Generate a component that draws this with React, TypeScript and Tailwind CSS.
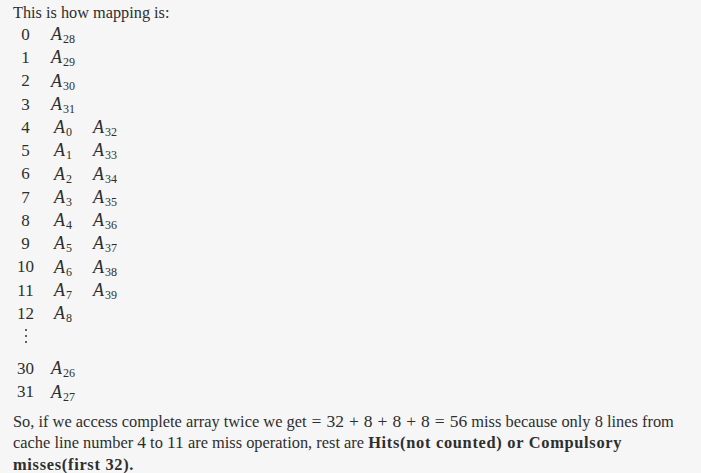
import React from "react";

const rows: { n: string; a: string; b?: string }[] = [
  { n: "0", a: "28" },
  { n: "1", a: "29" },
  { n: "2", a: "30" },
  { n: "3", a: "31" },
  { n: "4", a: "0", b: "32" },
  { n: "5", a: "1", b: "33" },
  { n: "6", a: "2", b: "34" },
  { n: "7", a: "3", b: "35" },
  { n: "8", a: "4", b: "36" },
  { n: "9", a: "5", b: "37" },
  { n: "10", a: "6", b: "38" },
  { n: "11", a: "7", b: "39" },
  { n: "12", a: "8" },
];

const tail = [
  { n: "30", a: "26" },
  { n: "31", a: "27" },
];

function A({ sub }: { sub: string }) {
  return (
    <span className="whitespace-nowrap">
      <span className="italic text-[18px]">A</span>
      <span className="text-[12px] relative top-[3px] ml-[1px]">{sub}</span>
    </span>
  );
}

function Row({ n, a, b }: { n: string; a: string; b?: string }) {
  return (
    <div className="grid grid-cols-[25px_50px_34px] h-[23.25px] items-center">
      <span className="text-center">{n}</span>
      <span className="text-center">
        <A sub={a} />
      </span>
      <span className="text-center">{b ? <A sub={b} /> : null}</span>
    </div>
  );
}

function Op({ c }: { c: string }) {
  return <span className="mx-[5px]">{c}</span>;
}

export default function App() {
  return (
    <div className="w-[701px] h-[473px] bg-[#f6f6f6] text-[#2e2e2e] pl-[13px] pt-[2px] overflow-hidden font-['Liberation_Serif',serif]">
      <p className="text-[16.3px] leading-[21px]">This is how mapping is:</p>
      <div className="text-[17px] mt-[-2px]">
        {rows.map((r) => (
          <Row key={r.n} {...r} />
        ))}
        <div className="grid grid-cols-[25px_50px_34px] h-[32px]">
          <span className="flex flex-col items-center gap-[4px] pt-[6px]">
            <span className="w-[2px] h-[2px] rounded-full bg-[#2e2e2e]" />
            <span className="w-[2px] h-[2px] rounded-full bg-[#2e2e2e]" />
            <span className="w-[2px] h-[2px] rounded-full bg-[#2e2e2e]" />
          </span>
        </div>
        {tail.map((r) => (
          <Row key={r.n} {...r} />
        ))}
      </div>
      <p className="text-[16.4px] leading-[21.5px] mt-[9px] whitespace-nowrap">
        <span className="block">
          So, if we access complete array twice we get
          <span className="text-[17.5px]">
            <Op c="=" />
            32
            <Op c="+" />
            8
            <Op c="+" />
            8
            <Op c="+" />
            8
            <Op c="=" />
            56
          </span>{" "}
          miss because only 8 lines from
        </span>
        <span className="block">
          cache line number <span className="text-[17.5px]">4</span> to{" "}
          <span className="text-[17.5px]">11</span> are miss operation, rest are{" "}
          <b className="tracking-[0.7px]">Hits(not counted) or Compulsory</b>
        </span>
        <span className="block">
          <b className="tracking-[0.7px]">misses(first 32)</b>
          <b>.</b>
        </span>
      </p>
    </div>
  );
}
